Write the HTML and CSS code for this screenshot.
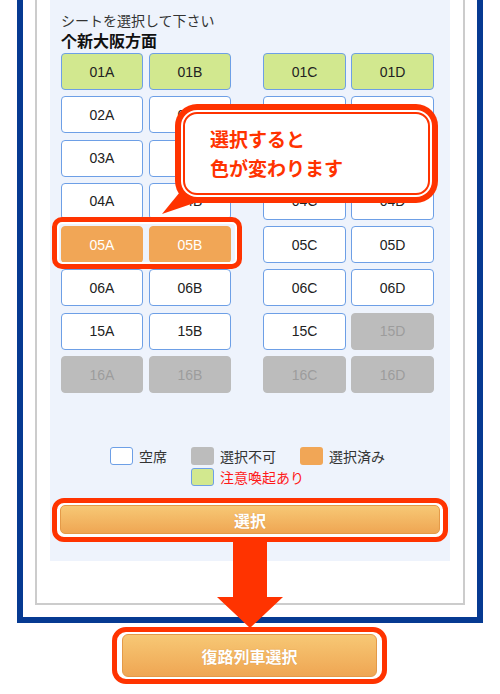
FILE: index.html
```html
<!DOCTYPE html>
<html lang="ja">
<head>
<meta charset="utf-8">
<title>シート選択</title>
<link rel="stylesheet" href="styles.css">
</head>
<body>
<div class="frame">
  <div class="inner">
    <div class="panel">
      <div class="lead">シートを選択して下さい</div>
      <div class="direction">个新大阪方面</div>
      <div class="seats">
        <div class="block left">
          <div class="seat caution">01A</div><div class="seat caution">01B</div>
          <div class="seat">02A</div><div class="seat">02B</div>
          <div class="seat">03A</div><div class="seat">03B</div>
          <div class="seat">04A</div><div class="seat">04B</div>
          <div class="seat chosen">05A</div><div class="seat chosen">05B</div>
          <div class="seat">06A</div><div class="seat">06B</div>
          <div class="seat">15A</div><div class="seat">15B</div>
          <div class="seat off">16A</div><div class="seat off">16B</div>
        </div>
        <div class="block right">
          <div class="seat caution">01C</div><div class="seat caution">01D</div>
          <div class="seat">02C</div><div class="seat">02D</div>
          <div class="seat">03C</div><div class="seat">03D</div>
          <div class="seat">04C</div><div class="seat">04D</div>
          <div class="seat">05C</div><div class="seat">05D</div>
          <div class="seat">06C</div><div class="seat">06D</div>
          <div class="seat">15C</div><div class="seat off">15D</div>
          <div class="seat off">16C</div><div class="seat off">16D</div>
        </div>
      </div>
      <div class="legend">
        <div class="item"><span class="swatch sw-free"></span>空席</div>
        <div class="item"><span class="swatch sw-off"></span>選択不可</div>
        <div class="item"><span class="swatch sw-chosen"></span>選択済み</div>
        <div class="item second"><span class="swatch sw-caution"></span><span class="warn">注意喚起あり</span></div>
      </div>
      <div class="ring select-ring"><div class="btn select-btn">選択</div></div>
    </div>
  </div>
</div>
<div class="bottom">
  <div class="ring bottom-ring"><div class="btn bottom-btn">復路列車選択</div></div>
</div>

<div class="ring05"></div>
<svg class="tail" width="50" height="30" viewBox="0 0 50 30"><polygon points="2,29 24,2 46,14" fill="#ff3300"/></svg>
<div class="callout">選択すると<br>色が変わります</div>
<svg class="arrow" width="66" height="88" viewBox="0 0 66 88"><polygon points="16,0 50,0 50,57 66,57 33,88 0,57 16,57" fill="#ff3300"/></svg>
</body>
</html>
```
FILE: styles.css
```css
html, body {
  margin: 0;
  padding: 0;
  background: #ffffff;
}
body {
  position: relative;
  width: 500px;
  height: 694px;
  overflow: hidden;
  font-family: "Noto Sans CJK JP", "Noto Sans", sans-serif;
  color: #333;
}
.frame {
  margin-left: 17px;
  width: 466px;
  box-sizing: border-box;
  border: 6px solid #063a92;
  border-top: 0;
  padding: 0 12px 12px 12px;
}
.inner {
  border: 2px solid #cccccc;
  border-top: 0;
  padding: 0 13px 42px 13px;
}
.panel {
  background: #eef3fc;
  padding: 10px 16px 19px 11px;
}
.lead {
  font-size: 14px;
  line-height: 20px;
  color: #333;
}
.direction {
  font-size: 16px;
  line-height: 20px;
  font-weight: bold;
  color: #111;
}
.seats {
  margin-top: 3px;
  display: flex;
  gap: 32px;
}
.block {
  display: grid;
  row-gap: 6.3px;
}
.block.left {
  grid-template-columns: 82px 82px;
  column-gap: 6px;
}
.block.right {
  grid-template-columns: 83px 83px;
  column-gap: 5px;
}
.seat {
  height: 37px;
  box-sizing: border-box;
  border: 1.5px solid #6d9fe6;
  border-radius: 4px;
  background: #ffffff;
  display: flex;
  align-items: center;
  justify-content: center;
  font-family: "Liberation Sans", Arial, sans-serif;
  font-size: 14px;
  color: #222;
}
.seat.caution {
  background: #d2e88f;
}
.seat.chosen {
  background: #f1a656;
  border-color: #f1a656;
  color: #fff;
}
.seat.off {
  background: #bcbcbc;
  border-color: #bcbcbc;
  color: #9c9c9c;
}
.legend {
  margin-top: 52px;
  display: grid;
  grid-template-columns: 57px 85px 85px;
  justify-content: center;
  column-gap: 24px;
  font-size: 14px;
  color: #333;
}
.item {
  display: flex;
  align-items: center;
  gap: 6px;
  height: 21px;
  white-space: nowrap;
}
.item.second {
  grid-column: 2;
}
.swatch {
  flex: none;
  width: 23px;
  height: 18px;
  box-sizing: border-box;
  border-radius: 3px;
  display: inline-block;
}
.sw-free { background: #fff; border: 1.5px solid #6d9fe6; }
.sw-off { background: #bcbcbc; }
.sw-chosen { background: #f1a656; }
.sw-caution { background: #d2e88f; border: 1.5px solid #6d9fe6; }
.warn {
  color: #ff1a1a;
}
.ring {
  border: 5px solid #ff3300;
  background: #fff;
}
.select-ring {
  margin: 11px -14px 0 -9px;
  border-radius: 12px;
  padding: 2px 3px 3px 3px;
}
.btn {
  box-sizing: border-box;
  border: 1px solid #e49a48;
  border-radius: 5px;
  background: linear-gradient(#f7c875, #efa653);
  color: #fff;
  font-weight: bold;
  font-size: 16px;
  display: flex;
  align-items: center;
  justify-content: center;
  text-shadow: 0 0 1px rgba(170, 90, 20, 0.4);
}
.select-btn {
  height: 29px;
}
.bottom {
  display: flex;
  justify-content: center;
  margin-top: 4px;
  padding-right: 1px;
}
.bottom-ring {
  width: 275px;
  box-sizing: border-box;
  border-radius: 14px;
  padding: 2px 5px;
}
.bottom-btn {
  height: 43px;
  border-radius: 6px;
}
.ring05 {
  position: absolute;
  left: 52px;
  top: 217px;
  width: 190px;
  height: 52px;
  box-sizing: border-box;
  border: 5px solid #ff3300;
  border-radius: 10px;
  box-shadow: inset 0 0 0 2px #fff;
}
.tail {
  position: absolute;
  left: 160px;
  top: 185px;
}
.callout {
  position: absolute;
  left: 183px;
  top: 112px;
  width: 247px;
  height: 83px;
  box-sizing: border-box;
  background: #fff;
  border: 2px solid #ff3300;
  border-radius: 14px;
  box-shadow: 0 0 0 2px #fff, 0 0 0 8px #ff3300;
  padding: 10px 0 0 25px;
  color: #ff3300;
  font-weight: bold;
  font-size: 19px;
  line-height: 29px;
}
.arrow {
  position: absolute;
  left: 217px;
  top: 540px;
}
```
